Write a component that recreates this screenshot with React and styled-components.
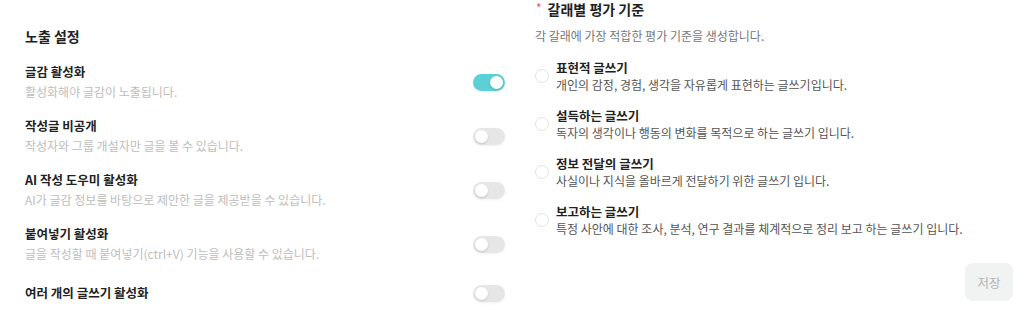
import React, { useState } from "react";
import styled, { createGlobalStyle } from "styled-components";

const Global = createGlobalStyle`
  html, body { margin: 0; padding: 0; background: #fff; }
  body { font-family: "Noto Sans CJK KR", "Noto Sans", sans-serif; -webkit-font-smoothing: antialiased; }
  * { box-sizing: border-box; }
`;

const Page = styled.div`
  display: grid;
  grid-template-columns: 480px 1fr;
  column-gap: 30px;
  padding: 0 11px 0 25px;
  width: 1024px;
  height: 314px;
  overflow: hidden;
`;

const LeftCol = styled.section`
  display: flex;
  flex-direction: column;
  padding-top: 26px;
`;

const SectionTitle = styled.h2`
  margin: 0 0 17px;
  font-size: 14px;
  line-height: 20px;
  font-weight: 700;
  color: #222;
`;

const SettingList = styled.div`
  display: flex;
  flex-direction: column;
  gap: 16px;
`;

const SettingRow = styled.div`
  display: flex;
  align-items: center;
  justify-content: space-between;
  min-height: ${(p) => (p.$compact ? "28px" : "38px")};
`;

const SettingText = styled.div`
  display: flex;
  flex-direction: column;
  gap: 2px;
`;

const SettingTitle = styled.div`
  font-size: 12.5px;
  line-height: 18px;
  font-weight: 600;
  color: #222;
`;

const SettingDesc = styled.div`
  font-size: 12px;
  line-height: 18px;
  color: #bdbdbd;
`;

const Toggle = styled.button`
  position: relative;
  width: 32px;
  height: 17px;
  border: none;
  padding: 0;
  border-radius: 9px;
  background: ${(p) => (p.$on ? "#5ccfd7" : "#e6e6e6")};
  box-shadow: 0 1px 3px rgba(0,0,0,0.06);
  cursor: pointer;
  flex-shrink: 0;
  &::after {
    content: "";
    position: absolute;
    top: 2px;
    left: ${(p) => (p.$on ? "17px" : "2px")};
    width: 13px;
    height: 13px;
    border-radius: 50%;
    background: #fff;
    box-shadow: 0 1px 2px rgba(0,0,0,0.15);
  }
`;

const RightCol = styled.section`
  display: flex;
  flex-direction: column;
`;

const CriteriaHeader = styled.h2`
  display: flex;
  align-items: center;
  gap: 6px;
  margin: 0;
  font-size: 14px;
  line-height: 18px;
  font-weight: 700;
  color: #222;
  padding-left: 1px;
`;

const Required = styled.span`
  color: #f05a5a;
  font-size: 12px;
  font-weight: 400;
  margin-top: -3px;
`;

const CriteriaDesc = styled.p`
  margin: 9px 0 14px;
  font-size: 12px;
  line-height: 18px;
  color: #777;
`;

const OptionList = styled.div`
  display: flex;
  flex-direction: column;
  gap: 14px;
`;

const Option = styled.label`
  display: flex;
  align-items: center;
  gap: 7px;
  cursor: pointer;
`;

const Radio = styled.span`
  width: 14px;
  height: 14px;
  border-radius: 50%;
  border: 1px solid #e2e2e2;
  background: #fff;
  flex-shrink: 0;
`;

const OptionText = styled.div`
  display: flex;
  flex-direction: column;
`;

const OptionTitle = styled.div`
  font-size: 12.5px;
  line-height: 17px;
  font-weight: 600;
  color: #222;
`;

const OptionDesc = styled.div`
  font-size: 12px;
  line-height: 17px;
  color: #555;
`;

const Footer = styled.div`
  display: flex;
  justify-content: flex-end;
  margin-top: 26px;
`;

const SaveButton = styled.button`
  width: 48px;
  height: 38px;
  border: none;
  border-radius: 8px;
  background: #f1f2f2;
  color: #b3b3b3;
  font-family: inherit;
  font-size: 12.5px;
  cursor: default;
`;

const settings = [
  { title: "글감 활성화", desc: "활성화해야 글감이 노출됩니다.", on: true },
  { title: "작성글 비공개", desc: "작성자와 그룹 개설자만 글을 볼 수 있습니다.", on: false },
  { title: "AI 작성 도우미 활성화", desc: "AI가 글감 정보를 바탕으로 제안한 글을 제공받을 수 있습니다.", on: false },
  { title: "붙여넣기 활성화", desc: "글을 작성할 때 붙여넣기(ctrl+V) 기능을 사용할 수 있습니다.", on: false },
  { title: "여러 개의 글쓰기 활성화", desc: null, on: false },
];

const options = [
  { title: "표현적 글쓰기", desc: "개인의 감정, 경험, 생각을 자유롭게 표현하는 글쓰기입니다." },
  { title: "설득하는 글쓰기", desc: "독자의 생각이나 행동의 변화를 목적으로 하는 글쓰기 입니다." },
  { title: "정보 전달의 글쓰기", desc: "사실이나 지식을 올바르게 전달하기 위한 글쓰기 입니다." },
  { title: "보고하는 글쓰기", desc: "특정 사안에 대한 조사, 분석, 연구 결과를 체계적으로 정리 보고 하는 글쓰기 입니다." },
];

export default function App() {
  const [toggles, setToggles] = useState(settings.map((s) => s.on));
  return (
    <>
      <Global />
      <Page>
        <LeftCol>
          <SectionTitle>노출 설정</SectionTitle>
          <SettingList>
            {settings.map((s, i) => (
              <SettingRow key={s.title} $compact={!s.desc}>
                <SettingText>
                  <SettingTitle>{s.title}</SettingTitle>
                  {s.desc && <SettingDesc>{s.desc}</SettingDesc>}
                </SettingText>
                <Toggle
                  $on={toggles[i]}
                  aria-label={s.title}
                  onClick={() => setToggles((t) => t.map((v, j) => (j === i ? !v : v)))}
                />
              </SettingRow>
            ))}
          </SettingList>
        </LeftCol>
        <RightCol>
          <CriteriaHeader>
            <Required>*</Required>
            갈래별 평가 기준
          </CriteriaHeader>
          <CriteriaDesc>각 갈래에 가장 적합한 평가 기준을 생성합니다.</CriteriaDesc>
          <OptionList>
            {options.map((o) => (
              <Option key={o.title}>
                <Radio />
                <OptionText>
                  <OptionTitle>{o.title}</OptionTitle>
                  <OptionDesc>{o.desc}</OptionDesc>
                </OptionText>
              </Option>
            ))}
          </OptionList>
          <Footer>
            <SaveButton>저장</SaveButton>
          </Footer>
        </RightCol>
      </Page>
    </>
  );
}
